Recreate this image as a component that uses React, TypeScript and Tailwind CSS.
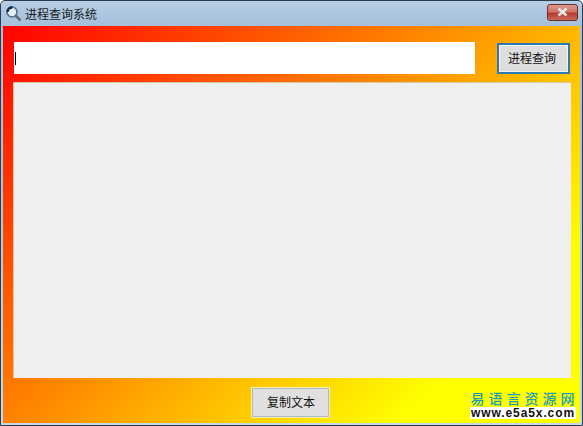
const cjk = "font-['Liberation_Sans','Noto_Sans_CJK_SC',sans-serif]"

export default function App() {
  return (
    <div className={`w-[583px] h-[426px] flex flex-col overflow-hidden rounded-t-[5px] border border-[#2c3c4c] bg-[linear-gradient(180deg,#b6cde5_0%,#a5bfdb_6%,#a9c3df_40%,#c3d8ea_100%)] ${cjk}`}>
      {/* Title bar */}
      <div className="h-[25px] shrink-0 flex items-center pl-[4px] pr-[4px]">
        <svg width="17" height="17" viewBox="0 0 17 17" className="shrink-0">
          <circle cx="7" cy="7" r="5" fill="#e6eef5" stroke="#4d6f90" strokeWidth="1.6" />
          <path d="M2.5 7a4.5 4.5 0 0 1 5-4.5" stroke="#14283c" strokeWidth="2.4" fill="none" />
          <path d="M10.5 10.5l5 5" stroke="#5c6f80" strokeWidth="2.6" />
        </svg>
        <span className="ml-[3px] mt-[2px] text-[12px] text-[#1a1a1a]">进程查询系统</span>
        <button className="ml-auto mb-[3px] w-[31px] h-[17px] flex items-center justify-center rounded-[3px] border border-[#6e2f2a] bg-[linear-gradient(180deg,#dc9a90_0%,#cf7568_45%,#b53a2e_55%,#c9685a_100%)]">
          <svg width="13" height="10" viewBox="0 0 13 10">
            <path d="M2.5 1.5l8 7M10.5 1.5l-8 7" stroke="#e8e8e8" strokeWidth="2.6" />
          </svg>
        </button>
      </div>

      {/* Client area */}
      <div className="relative flex-1 mx-[2px] mb-[2px] flex flex-col bg-[linear-gradient(136deg,#ff0000_0%,#ffff00_81.5%)] pl-[10px] pr-[9px]">
        <div className="mt-[16px] flex items-center justify-between">
          <div className="ml-[1px] pl-[1px] w-[461px] h-[32px] bg-white flex items-center">
            <div className="w-px h-[13px] bg-black" />
          </div>
          <button className="mr-[1px] w-[73px] h-[31px] pt-[2px] pr-[3px] border-2 border-[#2a7ab8] shadow-[inset_0_0_0_1px_#eef4f8] bg-[#dedede] text-[12px] text-[#111]">
            进程查询
          </button>
        </div>
        <div className="mt-[8px] h-[296px] bg-[#efefef] border-t border-l border-[#d8c8a0]" />
        <div className="mt-[10px] flex justify-center">
          <button className="w-[77px] h-[29px] mr-[3px] pt-[1px] pl-[1px] border border-[#b8b8b8] outline outline-1 outline-[#f4eeb8] bg-[#e0e0e0] text-[12px] text-[#111]">
            复制文本
          </button>
        </div>

        {/* Site watermark */}
        <div className="absolute right-[4px] bottom-[4px] flex flex-col items-center">
          <span className="mb-[2px] mr-[-3px] text-[14px] leading-[14px] tracking-[4px] font-medium text-[#1c9fb4] font-['Noto_Sans_CJK_SC',serif]">易语言资源网</span>
          <span className="bg-white px-[1px] text-[12px] leading-[12px] font-bold tracking-[0.9px] text-[#111] font-['Liberation_Sans',sans-serif]">www.e5a5x.com</span>
        </div>
      </div>
    </div>
  )
}
